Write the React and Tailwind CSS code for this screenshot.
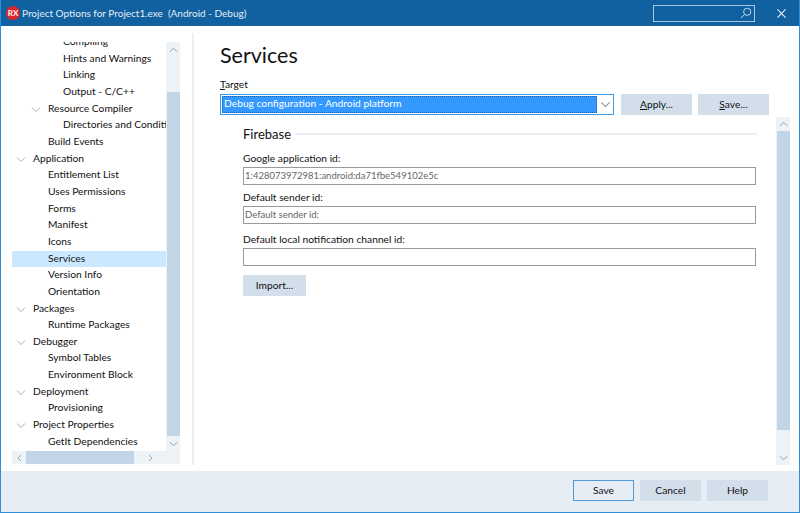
import React from "react";

const Chev = ({ dir = "down", className = "" }) => {
  const d = {
    down: "M1 1.5 L5.5 6 L10 1.5",
    up: "M1 6 L5.5 1.5 L10 6",
    left: "M6 1 L1.5 5.5 L6 10",
    right: "M1.5 1 L6 5.5 L1.5 10",
  }[dir];
  const vb = dir === "down" || dir === "up" ? "0 0 11 7.5" : "0 0 7.5 11";
  return (
    <svg viewBox={vb} className={className} fill="none" stroke="currentColor" strokeWidth="1.1">
      <path d={d} />
    </svg>
  );
};

const rows = [
  [2, "Compiling"],
  [2, "Hints and Warnings"],
  [2, "Linking"],
  [2, "Output - C/C++"],
  [1, "Resource Compiler", true],
  [2, "Directories and Conditionals"],
  [1, "Build Events"],
  [0, "Application", true],
  [1, "Entitlement List"],
  [1, "Uses Permissions"],
  [1, "Forms"],
  [1, "Manifest"],
  [1, "Icons"],
  [1, "Services", false, true],
  [1, "Version Info"],
  [1, "Orientation"],
  [0, "Packages", true],
  [1, "Runtime Packages"],
  [0, "Debugger", true],
  [1, "Symbol Tables"],
  [1, "Environment Block"],
  [0, "Deployment", true],
  [1, "Provisioning"],
  [0, "Project Properties", true],
  [1, "GetIt Dependencies"],
];

const indent = { 0: "pl-[21px]", 1: "pl-[36px]", 2: "pl-[51px]" };
const chevPos = { 0: "left-[4px]", 1: "left-[19px]", 2: "left-[34px]" };

const Btn = ({ children, className = "" }) => (
  <button className={`flex items-center justify-center bg-[#d2dfeb] text-[#111111] text-[10.25px] ${className}`}>{children}</button>
);

const Field = ({ label, value, className = "" }) => (
  <div className={className}>
    <div className="text-[10.25px] leading-[16px] text-[#111111]">{label}</div>
    <div className="mt-[1px] h-[18px] border border-[#9a9a9a] bg-white pl-[1px] text-[9.5px] leading-[16px] text-[#666666] whitespace-nowrap overflow-hidden">
      {value}
    </div>
  </div>
);

export default function App() {
  return (
    <div className="w-[800px] h-[513px] flex flex-col bg-white overflow-hidden border-x border-b border-[#2f8fdb] font-['Lato','Open_Sans',sans-serif]">
      <div className="h-[26px] shrink-0 -mx-[1px] bg-[#11609f] flex items-center pl-[6px] pr-[14px] text-white">
        <div className="w-[14px] h-[14px] rounded-full bg-[#e0252b] flex items-center justify-center text-[8px] font-bold leading-none">RX</div>
        <div className="ml-[2px] text-[10px] text-[#e4eef6] whitespace-pre">Project Options for Project1.exe  (Android - Debug)</div>
        <div className="ml-auto w-[102px] h-[17px] border border-[#a9c9e2] flex items-center justify-end pr-[2px] text-[#c5dbec]">
          <svg viewBox="0 0 12 12" className="w-[12px] h-[12px]" fill="none" stroke="currentColor" strokeWidth="1">
            <circle cx="7.2" cy="4.8" r="3.6" />
            <path d="M4.6 7.4 L1 11" />
          </svg>
        </div>
        <svg viewBox="0 0 10 10" className="ml-[22px] w-[9px] h-[9px] text-[#eef4f9]" fill="none" stroke="currentColor" strokeWidth="1.2">
          <path d="M0.5 0.5 L9.5 9.5 M9.5 0.5 L0.5 9.5" />
        </svg>
      </div>

      <div className="flex-1 flex min-h-0">
        <div className="w-[193px] shrink-0 flex border-r-2 border-[#e9eff5] mt-[7px] mb-[6px] pl-[11px] pr-[13px]">
          <div className="w-[154px] shrink-0 flex flex-col pt-[9px] pb-[1px]">
            <div className="flex-1 min-h-0 overflow-hidden">
              <div className="-mt-[8px]">
                {rows.map(([lvl, text, exp, sel]) => (
                  <div
                    key={text}
                    className={`relative h-[16.67px] whitespace-nowrap text-[10.25px] leading-[15.67px] text-[#111111] ${indent[lvl]} ${sel ? "bg-[#cce8ff]" : ""}`}
                  >
                    {exp && <Chev dir="down" className={`absolute top-[5px] w-[10px] h-[7px] text-[#a6b0b8] ${chevPos[lvl]}`} />}
                    {text}
                  </div>
                ))}
              </div>
            </div>
            <div className="h-[13px] shrink-0 bg-[#edf2f7] flex items-center text-[#8a8f94]">
              <div className="w-[14px] flex justify-center"><Chev dir="left" className="w-[5px] h-[8px]" /></div>
              <div className="w-[108px] h-[13px] bg-[#c2d5e6]" />
              <div className="flex-1 flex justify-center"><Chev dir="right" className="w-[5px] h-[8px]" /></div>
            </div>
          </div>
          <div className="w-[14px] shrink-0 flex flex-col pt-[9px] pb-[1px]">
            <div className="flex-1 bg-[#edf2f7] flex flex-col text-[#8a8f94]">
              <div className="h-[50px] flex justify-center pt-[5px] shrink-0"><Chev dir="up" className="w-[9px] h-[6px]" /></div>
              <div className="flex-1 bg-[#c2d5e6] ml-[1px]" />
              <div className="h-[15px] flex justify-center items-center shrink-0"><Chev dir="down" className="w-[9px] h-[6px]" /></div>
              <div className="h-[13px] shrink-0" />
            </div>
          </div>
        </div>

        <div className="flex-1 min-w-0 pl-[26px] pr-[9px] pb-[6px] relative flex flex-col">
          <h1 className="mt-[11px] text-[21.5px] leading-[36px] text-[#111111]">Services</h1>
          <div className="mt-[4px] text-[10.25px] leading-[15px] mb-[1px] text-[#111111]"><span className="underline">T</span>arget</div>
          <div className="mt-[1px] flex items-stretch h-[21px]">
            <div className="w-[394px] border border-[#3b9ae6] flex bg-white">
              <div className="flex-1 m-[1px] bg-[#3399ff] text-white text-[10.25px] leading-[15px] pl-[2px] outline-dotted outline-1 outline-[#1a5fa8] -outline-offset-1">
                Debug configuration - Android platform
              </div>
              <div className="w-[15px] flex items-center justify-center text-[#8a8f94]"><Chev dir="down" className="w-[11px] h-[7px]" /></div>
            </div>
            <Btn className="ml-[7px] w-[71px]"><span><span className="underline">A</span>pply...</span></Btn>
            <Btn className="ml-[6px] w-[71px]"><span><span className="underline">S</span>ave...</span></Btn>
          </div>
          <div className="flex-1 min-h-0 flex mt-[2px]">
            <div className="flex-1 min-w-0 pl-[23px] pt-[7px]">
              <div className="flex items-center pr-[19px]">
                <span className="text-[13px] leading-[20px] text-[#111111]">Firebase</span>
                <div className="flex-1 ml-[4px] h-[2px] bg-[#e9eff5]" />
              </div>
              <div className="pr-[20px]">
                <Field className="mt-[6px]" label="Google application id:" value="1:428073972981:android:da71fbe549102e5c" />
                <Field className="mt-[4px]" label="Default sender id:" value="Default sender id:" />
                <Field className="mt-[7px]" label="Default local notification channel id:" value="" />
              </div>
              <Btn className="mt-[9px] w-[63px] h-[21px]">Import...</Btn>
            </div>
            <div className="w-[14px] shrink-0 bg-[#edf2f7] flex flex-col text-[#8a8f94]">
              <div className="h-[14px] flex justify-center items-center shrink-0"><Chev dir="up" className="w-[9px] h-[6px]" /></div>
              <div className="h-[299px] bg-[#c2d5e6] ml-[1px]" />
              <div className="flex-1" />
              <div className="h-[14px] flex justify-center items-center shrink-0"><Chev dir="down" className="w-[9px] h-[6px]" /></div>
            </div>
          </div>
        </div>
      </div>

      <div className="h-[41px] shrink-0 bg-[#e6edf4] flex items-start justify-end pt-[9px] pr-[31px] gap-[6px]">
        <Btn className="w-[61px] h-[21px] !bg-[#e6edf4] border border-[#4a9bd8]">Save</Btn>
        <Btn className="w-[61px] h-[21px]">Cancel</Btn>
        <Btn className="w-[61px] h-[21px]">Help</Btn>
      </div>
    </div>
  );
}
